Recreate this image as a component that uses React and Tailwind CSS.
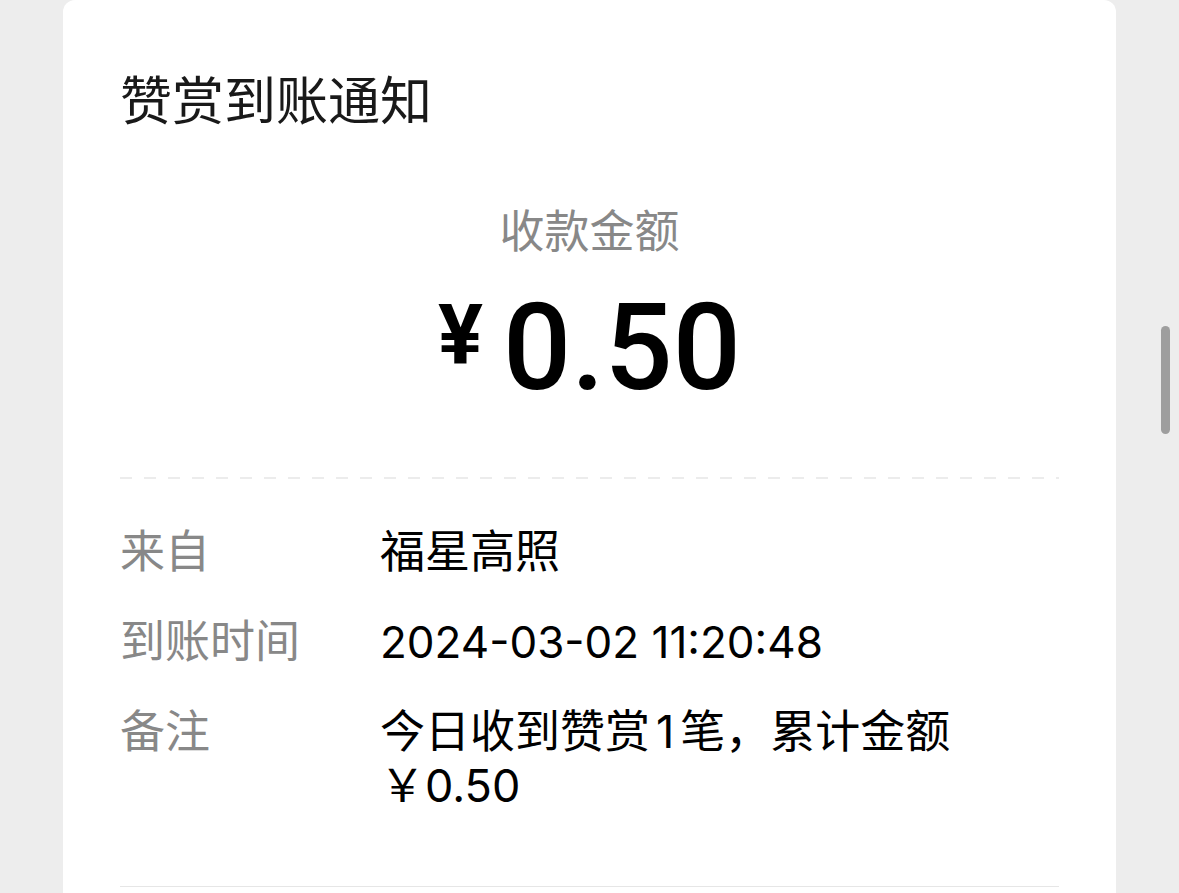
import React from 'react';

const font = "font-['Inter','Noto_Sans_CJK_SC',sans-serif]";

const rows = [
  { label: '来自', value: [<span key="a">福星高照</span>] },
  { label: '到账时间', value: [<span key="a" className="text-[44px]">2024-03-02 11:20:48</span>] },
  {
    label: '备注',
    value: [
      <span key="a">
        今日收到赞赏<span className="mx-[6px]">1</span>笔，累计金额
      </span>,
      <span key="b">￥0.50</span>,
    ],
  },
];

function DetailRow({ label, value }) {
  return (
    <div className="flex">
      <div className="w-[260px] shrink-0 text-[45px] leading-[54px] text-[#888888]">{label}</div>
      <div className="flex flex-1 flex-col text-[45px] leading-[54px] text-black">{value}</div>
    </div>
  );
}

export default function App() {
  return (
    <div className={`relative h-[893px] overflow-hidden bg-[#ededed] px-[63px] ${font}`}>
      <div className="rounded-t-xl bg-white px-[57px] pt-[72px] pb-[60px]">
        {/* header */}
        <div className="text-[52px] leading-[60px] text-[#191919]">赞赏到账通知</div>

        {/* amount */}
        <div className="mt-[70px] text-center text-[45px] leading-[60px] text-[#888888]">收款金额</div>
        <div className="mt-[26px] flex items-start justify-center text-black font-['Roboto',sans-serif]">
          <span className="mt-[6px] mr-[20px] text-[84px] leading-[84px] font-bold">¥</span>
          <span className="text-[120px] leading-[120px] font-medium">0.50</span>
        </div>

        {/* dashed divider */}
        <div className="mt-[69px] h-[2px] bg-[linear-gradient(to_right,#ececec_50%,transparent_50%)] bg-[length:24px_2px]" />

        {/* details */}
        <div className="mt-[46px] flex flex-col gap-[36px]">
          {rows.map((r) => (
            <DetailRow key={r.label} label={r.label} value={r.value} />
          ))}
        </div>

        <div className="mt-[73px] h-px bg-[#e6e6e6]" />
      </div>

      {/* scroll indicator */}
      <div className="absolute left-[1161px] top-[326px] h-[108px] w-[9px] rounded-full bg-[#9e9e9e]" />
    </div>
  );
}
